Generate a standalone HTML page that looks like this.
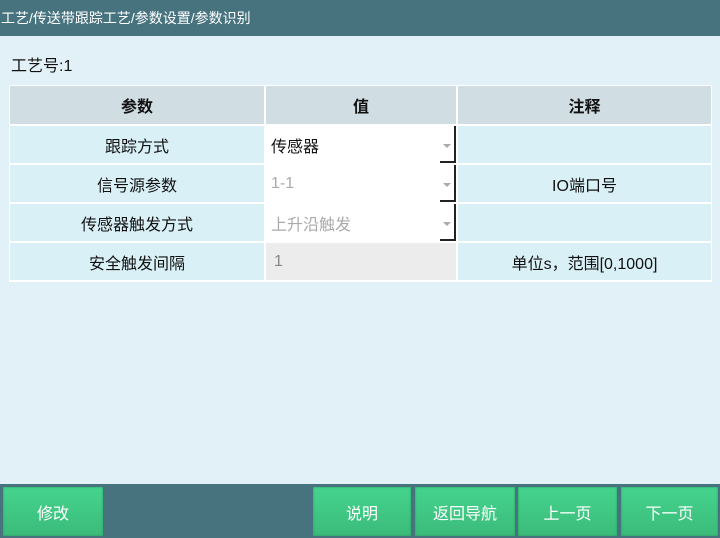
<!DOCTYPE html>
<html><head><meta charset="utf-8"><style>
*{margin:0;padding:0;box-sizing:border-box}
body{width:720px;height:538px;background:#e2f1f7;font-family:"Liberation Sans","Noto Sans CJK SC",sans-serif;position:relative;overflow:hidden;color:#111}
.hd{position:absolute;left:0;top:0;width:720px;height:36px;background:#47737f;color:#fff;font-size:14px;line-height:36px;padding-left:1px}
.no{position:absolute;left:11px;top:52px;font-size:16px}
.tb{position:absolute;left:9px;top:85px;width:703px;height:197px;background:#fff}
.c{position:absolute;font-size:16px;display:flex;align-items:center;justify-content:center}
.th{background:#d0dde2;font-weight:bold}
.td{background:#d9f0f7}
.v{background:#fff;justify-content:flex-start;padding-left:5px}
.v.g{color:#aaa}
.sel::after{content:"";position:absolute;right:5px;top:18px;border:4px solid transparent;border-top:4px solid #aaa;border-bottom:0}
.sel::before{content:"";position:absolute;right:0;bottom:0;width:14px;border-right:2px solid #222;border-bottom:2px solid #222;height:14px}
.sel .bar{position:absolute;right:0;top:0;width:2px;height:100%;background:#222}
.bb{position:absolute;left:0;top:484px;width:720px;height:54px;background:#47737f}
.b{position:absolute;top:487px;height:49px;background:linear-gradient(#45d48e,#3bbb7a);color:#fff;font-size:16px;display:flex;align-items:center;justify-content:center;box-shadow:inset 0 0 2px #2a9a60}
</style></head><body>
<div class="hd">工艺/传送带跟踪工艺/参数设置/参数识别</div>
<div class="no">工艺号:1</div>
<div class="tb"></div>
<div class="c th" style="left:10px;top:86px;width:254px;height:38px">参数</div>
<div class="c th" style="left:266px;top:86px;width:190px;height:38px">值</div>
<div class="c th" style="left:458px;top:86px;width:253px;height:38px">注释</div>

<div class="c td" style="left:10px;top:126px;width:254px;height:37px">跟踪方式</div>
<div class="c v sel" style="left:266px;top:126px;width:190px;height:37px"><span class="bar"></span>传感器</div>
<div class="c td" style="left:458px;top:126px;width:253px;height:37px"></div>

<div class="c td" style="left:10px;top:165px;width:254px;height:37px">信号源参数</div>
<div class="c v g sel" style="left:266px;top:165px;width:190px;height:37px"><span class="bar"></span>1-1</div>
<div class="c td" style="left:458px;top:165px;width:253px;height:37px">IO端口号</div>

<div class="c td" style="left:10px;top:204px;width:254px;height:37px">传感器触发方式</div>
<div class="c v g sel" style="left:266px;top:204px;width:190px;height:37px"><span class="bar"></span>上升沿触发</div>
<div class="c td" style="left:458px;top:204px;width:253px;height:37px"></div>

<div class="c td" style="left:10px;top:243px;width:254px;height:37px">安全触发间隔</div>
<div class="c v" style="left:266px;top:243px;width:190px;height:37px;background:#ececec;color:#888;padding-left:8px">1</div>
<div class="c td" style="left:458px;top:243px;width:253px;height:37px">单位s，范围[0,1000]</div>

<div class="bb"></div>
<div class="b" style="left:3px;width:100px">修改</div>
<div class="b" style="left:313px;width:98px">说明</div>
<div class="b" style="left:415px;width:100px">返回导航</div>
<div class="b" style="left:518px;width:99px">上一页</div>
<div class="b" style="left:621px;width:97px">下一页</div>
</body></html>
